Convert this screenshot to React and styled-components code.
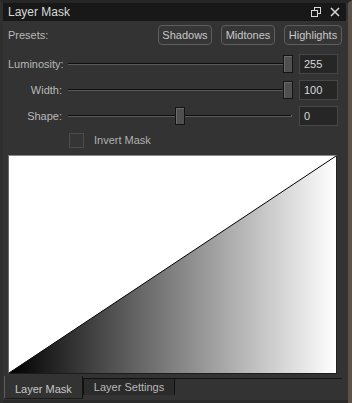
import React from "react";
import styled, { createGlobalStyle } from "styled-components";

const Global = createGlobalStyle`
  html, body { margin: 0; padding: 0; background: #2e2e2e; }
  body { width: 352px; height: 403px; overflow: hidden; }
`;

const Frame = styled.div`
  width: 352px;
  height: 403px;
  box-sizing: border-box;
  background: #333333;
  border-top: 3px solid #262626;
  border-right: 4px solid #5b524b;
  border-left: 3px solid #2f2f2f;
  display: flex;
  flex-direction: column;
  font-family: "Liberation Sans", Arial, sans-serif;
  font-size: 11px;
  color: #c4c4c4;
`;

const TitleBar = styled.div`
  height: 18px;
  background: #181818;
  display: flex;
  align-items: center;
  padding: 0 6px 0 5px;
  margin-right: 2px;
  color: #d8d8d8;
  font-size: 12px;
`;

const Title = styled.span`
  flex: 1;
`;

const TitleIcons = styled.div`
  display: flex;
  gap: 9px;
  align-items: center;
`;

const Body = styled.div`
  flex: 1;
  display: flex;
  flex-direction: column;
  padding: 4px 6px 0 5px;
`;

const PresetRow = styled.div`
  display: flex;
  align-items: center;
  height: 20px;
  margin-bottom: 8px;
`;

const PresetLabel = styled.span`
  flex: 1;
  color: #b8b8b8;
`;

const PresetButtons = styled.div`
  display: flex;
  gap: 9px;
`;

const PresetButton = styled.button`
  height: 20px;
  padding: 0;
  background: #363636;
  border: 1px solid #5d5d5d;
  border-radius: 4px;
  color: #c8c8c8;
  font: inherit;
  font-size: 11px;
  width: ${p => p.$w}px;
`;

const SliderRow = styled.div`
  display: flex;
  align-items: center;
  height: 22px;
  margin-bottom: 4px;
`;

const SliderLabel = styled.span`
  width: 54px;
  text-align: right;
  color: #b8b8b8;
`;

const Track = styled.div`
  position: relative;
  width: 224px;
  height: 18px;
  margin: 0 7px 0 6px;
  display: flex;
  align-items: center;
`;

const Groove = styled.div`
  width: 100%;
  height: 1px;
  background: #0e0e0e;
  border-bottom: 1px solid #5a5a5a;
  border-right: 1px solid #6a6a6a;
`;

const Thumb = styled.div`
  position: absolute;
  top: 0;
  width: 8px;
  height: 16px;
  background: #4f4f4f;
  border: 1px solid #141414;
  box-shadow: inset 1px 1px 0 #6a6a6a;
`;

const ValueBox = styled.div`
  width: 39px;
  height: 20px;
  box-sizing: border-box;
  background: #262626;
  border: 1px solid #474747;
  color: #d8d8d8;
  padding: 3px 0 0 4px;
`;

const CheckRow = styled.label`
  display: flex;
  align-items: center;
  height: 18px;
  padding-left: 61px;
  margin-bottom: 6px;
  color: #b0b0b0;
`;

const Box = styled.span`
  width: 13px;
  height: 13px;
  border: 1px solid #4c4c4c;
  background: #353535;
  margin-right: 10px;
`;

const Preview = styled.div`
  width: 329px;
  height: 219px;
  box-sizing: border-box;
  border-top: 1px solid #8a8a8a;
  border-left: 1px solid #6a6a6a;
  border-right: 1px solid #202020;
  border-bottom: 1px solid #1c1c1c;
  background: #fff;
`;

const TabBar = styled.div`
  display: flex;
  align-items: flex-end;
  height: 23px;
  margin-top: 2px;
  margin-left: -4px;
`;

const Tab = styled.div`
  height: ${p => (p.$active ? 23 : 17)}px;
  box-sizing: border-box;
  display: flex;
  align-items: center;
  padding: 0 ${p => (p.$active ? 10 : 10)}px;
  background: ${p => (p.$active ? "#333" : "#2b2b2b")};
  color: ${p => (p.$active ? "#c8c8c8" : "#b8b8b8")};
  border-left: 1px solid ${p => (p.$active ? "#5a5a5a" : "#111")};
  border-right: 1px solid #111;
  border-top: ${p => (p.$active ? "none" : "1px solid #111")};
  border-bottom: ${p => (p.$active ? "1px solid #1a1a1a" : "none")};
  align-self: flex-start;
  margin-top: ${p => (p.$active ? 0 : 2)}px;
  padding-top: ${p => (p.$active ? 4 : 0)}px;
`;

const TabFill = styled.div`
  flex: 1;
  align-self: flex-start;
  border-top: 1px solid #141414;
  margin-top: 2px;
`;

const Bottom = styled.div`
  height: 3px;
  background: #2a2a2a;
`;

// pct is the thumb position along the usable track (track minus thumb width)
const Slider = ({ label, pct, value }) => (
  <SliderRow>
    <SliderLabel>{label}</SliderLabel>
    <Track>
      <Groove />
      <Thumb style={{ left: `${Math.round((pct / 100) * 216)}px` }} />
    </Track>
    <ValueBox>{value}</ValueBox>
  </SliderRow>
);

export default function App() {
  return (
    <>
      <Global />
      <Frame>
        <TitleBar>
          <Title>Layer Mask</Title>
          <TitleIcons>
            <svg width="10" height="10" viewBox="0 0 10 10">
              <rect x="3.5" y="0.5" width="6" height="6" fill="none" stroke="#d8d8d8" />
              <rect x="0.5" y="3.5" width="6" height="6" fill="#181818" stroke="#d8d8d8" />
            </svg>
            <svg width="10" height="10" viewBox="0 0 10 10">
              <path d="M1 1 L9 9 M9 1 L1 9" stroke="#d8d8d8" strokeWidth="1.5" />
            </svg>
          </TitleIcons>
        </TitleBar>
        <Body>
          <PresetRow>
            <PresetLabel>Presets:</PresetLabel>
            <PresetButtons>
              <PresetButton $w={54}>Shadows</PresetButton>
              <PresetButton $w={54}>Midtones</PresetButton>
              <PresetButton $w={58}>Highlights</PresetButton>
            </PresetButtons>
          </PresetRow>
          <Slider label="Luminosity:" pct={99.5} value="255" />
          <Slider label="Width:" pct={99.5} value="100" />
          <Slider label="Shape:" pct={49.5} value="0" />
          <CheckRow>
            <Box />
            Invert Mask
          </CheckRow>
          <Preview>
            <svg width="327" height="217" viewBox="0 0 327 217" preserveAspectRatio="none">
              <defs>
                <linearGradient id="g" x1="0" x2="1" y1="0" y2="0">
                  <stop offset="0" stopColor="#000" />
                  <stop offset="0.5" stopColor="#808080" />
                  <stop offset="1" stopColor="#fff" />
                </linearGradient>
              </defs>
              <rect width="327" height="217" fill="#fff" />
              <polygon points="0,217 327,0 327,217" fill="url(#g)" />
              <line x1="0" y1="217" x2="327" y2="0" stroke="#000" strokeWidth="1" />
            </svg>
          </Preview>
          <TabBar>
            <Tab $active>Layer Mask</Tab>
            <Tab>Layer Settings</Tab>
            <TabFill />
          </TabBar>
        </Body>
        <Bottom />
      </Frame>
    </>
  );
}
